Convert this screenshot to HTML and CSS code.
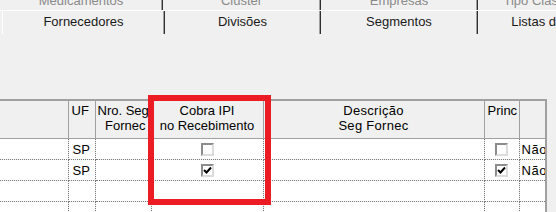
FILE: index.html
```html
<!DOCTYPE html>
<html lang="pt-BR">
<head>
    <meta charset="UTF-8">
    <title>Cadastro - Fornecedores</title>
    <link rel="stylesheet" href="styles.css">
</head>
<body>

    <div class="tabs">
        <div class="tab-row back">
            <div class="tab w163">Medicamentos</div>
            <div class="tab w158">Cluster</div>
            <div class="tab w157">Empresas</div>
            <div class="tab w157">Tipo Classificação</div>
        </div>
        <div class="tab-row front">
            <div class="tab active">Fornecedores</div>
            <div class="tab w156">Divisões</div>
            <div class="tab w157">Segmentos</div>
            <div class="tab w157">Listas de Preço</div>
        </div>
    </div>

    <div class="panel"></div>

    <div class="grid">
        <table>
            <colgroup>
                <col style="width:68px">
                <col style="width:27px">
                <col style="width:56px">
                <col style="width:112px">
                <col style="width:221px">
                <col style="width:35px">
                <col style="width:26px">
            </colgroup>
            <thead>
                <tr>
                    <th></th>
                    <th class="left">UF</th>
                    <th class="nro"><span class="line1">Nro. Seg</span><span class="line2">Fornec</span></th>
                    <th>Cobra IPI<br>no Recebimento</th>
                    <th class="spaced">Descrição<br>Seg Fornec</th>
                    <th class="left">Princ</th>
                    <th></th>
                </tr>
            </thead>
            <tbody>
                <tr>
                    <td></td>
                    <td>SP</td>
                    <td></td>
                    <td><span class="check"></span></td>
                    <td></td>
                    <td><span class="check"></span></td>
                    <td class="clip">Não</td>
                </tr>
                <tr>
                    <td></td>
                    <td>SP</td>
                    <td></td>
                    <td><span class="check checked"><svg viewBox="0 0 9 9" width="9" height="9"><path d="M1 4 L3.5 6.5 L8 1.5" fill="none" stroke="#000" stroke-width="2"/></svg></span></td>
                    <td></td>
                    <td><span class="check checked"><svg viewBox="0 0 9 9" width="9" height="9"><path d="M1 4 L3.5 6.5 L8 1.5" fill="none" stroke="#000" stroke-width="2"/></svg></span></td>
                    <td class="clip">Não</td>
                </tr>
                <tr>
                    <td></td><td></td><td></td><td></td><td></td><td></td><td></td>
                </tr>
                <tr>
                    <td></td><td></td><td></td><td></td><td></td><td></td><td></td>
                </tr>
            </tbody>
        </table>
    </div>

    <!-- marcação em vermelho da coluna nova -->
    <div class="highlight"></div>

</body>
</html>
```

FILE: styles.css
```css
body {
    margin: 0;
    width: 556px;
    height: 212px;
    overflow: hidden;
    position: relative;
    background-color: #f0f0f0;
    font-family: "Liberation Sans", Arial, sans-serif;
    font-size: 13px;
    color: #000;
}

/* abas */
.tabs {
    height: 34px;
    overflow: hidden;
}

.tab-row {
    display: flex;
    white-space: nowrap;
}

.tab {
    flex: 0 0 auto;
    box-sizing: border-box;
    overflow: hidden;
    text-align: center;
    border-right: 1px solid #303030;
    box-shadow: inset -1px 0 #a0a0a0;
}

.w156 { width: 156px; }
.w157 { width: 157px; }
.w158 { width: 158px; }
.w163 { width: 163px; }

.back {
    height: 20px;
    margin-top: -10px;
    border-bottom: 1px solid #fff;
}

.back .tab {
    line-height: 22px;
    color: #8a8a8a;
}

.front {
    padding-left: 2px;
}

.front .tab {
    height: 24px;
    line-height: 22px;
    border-bottom: 1px solid #fff;
    color: #1a1a1a;
}

.front .tab.active {
    width: 163px;
    border-left: 1px solid #fff;
    border-bottom-color: #f0f0f0;
}

.panel {
    height: 65px;
}

/* grade */
.grid {
    width: 545px;
    border-top: 2px solid #a0a0a0;
    border-right: 2px solid #a0a0a0;
}

table {
    width: 545px;
    table-layout: fixed;
    border-collapse: collapse;
}

th {
    height: 35px;
    padding: 2px 1px 0;
    vertical-align: top;
    font-weight: normal;
    line-height: 15px;
    text-align: center;
    background-color: #f0f0f0;
    border-right: 1px solid #a0a0a0;
    border-bottom: 1px solid #a0a0a0;
    overflow: hidden;
    white-space: nowrap;
}

th.left {
    text-align: left;
    padding-left: 3px;
}

th.spaced {
    letter-spacing: 0.3px;
}

.nro .line1 {
    display: block;
    text-align: left;
    padding-left: 1px;
}

.nro .line2 {
    display: block;
    text-align: right;
    padding-right: 4px;
}

td {
    height: 21px;
    padding: 0 0 0 4px;
    line-height: 15px;
    vertical-align: top;
    padding-top: 3px;
    box-sizing: border-box;
    background-color: #fff;
    border-right: 1px dotted #7a7a7a;
    border-bottom: 1px dotted #7a7a7a;
    white-space: nowrap;
    overflow: hidden;
}

td.clip {
    padding-left: 2px;
    letter-spacing: 0.6px;
}

td:last-child,
th:last-child {
    border-right: none;
}

.check {
    display: block;
    width: 13px;
    height: 13px;
    margin: 1px auto 0;
    box-sizing: border-box;
    background-color: #fff;
    border: 2px solid;
    border-color: #8c8c8c #dcdcdc #dcdcdc #8c8c8c;
    position: relative;
    left: -2px;
}

.check svg {
    display: block;
}

.highlight {
    position: absolute;
    left: 148px;
    top: 95px;
    width: 123px;
    height: 110px;
    box-sizing: border-box;
    border: 6px solid #ec1c24;
}
```
